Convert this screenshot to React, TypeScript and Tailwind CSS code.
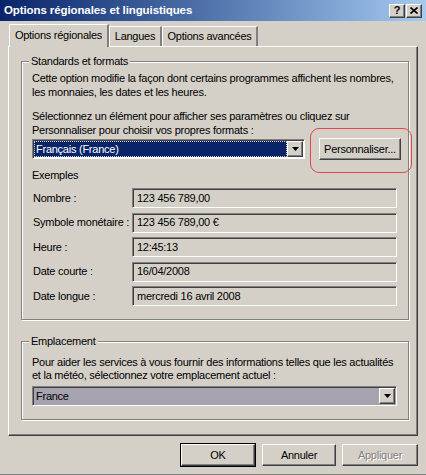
import React from 'react';

const raised =
  'border border-t-white border-l-white border-b-[#404040] border-r-[#404040] shadow-[inset_-1px_-1px_0_#808080]';
const sunken =
  'border border-t-[#808080] border-l-[#808080] border-b-white border-r-white shadow-[inset_1px_1px_0_#404040]';

const Arrow = () => (
  <div className={`w-[16px] h-[16px] bg-[#d4d0c8] flex items-center justify-center ${raised}`}>
    <svg width="7" height="4" viewBox="0 0 7 4">
      <path d="M0 0h7L3.5 4z" fill="#000" />
    </svg>
  </div>
);

const Group = ({ title, className, children }: { title: string; className?: string; children: React.ReactNode }) => (
  <div className={`border border-[#808080] shadow-[1px_1px_0_#fff,inset_1px_1px_0_#fff] ${className ?? ''}`}>
    <div className="-mt-[8px] ml-[7px] px-[2px] w-fit bg-[#d4d0c8] leading-[14px]">{title}</div>
    {children}
  </div>
);

const examples = [
  ['Nombre :', '123 456 789,00'],
  ['Symbole monétaire :', '123 456 789,00 €'],
  ['Heure :', '12:45:13'],
  ['Date courte :', '16/04/2008'],
  ['Date longue :', 'mercredi 16 avril 2008'],
];

export default function App() {
  return (
    <div
      className="w-[426px] h-[475px] bg-[#d4d0c8] text-black text-[11px] tracking-[-0.25px] flex flex-col overflow-hidden border-b border-[#808080]"
      style={{ fontFamily: '"Liberation Sans", Arial, sans-serif' }}
    >
      {/* title bar */}
      <div className="h-[21px] shrink-0 flex items-center justify-between pl-[4px] pr-[4px] bg-gradient-to-r from-[#0a246a] to-[#a6caf0]">
        <span className="text-white font-bold text-[11.5px] tracking-[-0.1px]">Options régionales et linguistiques</span>
        <div className="flex gap-[1px]">
          <div className={`w-[16px] h-[14px] bg-[#d4d0c8] flex items-center justify-center font-bold text-[11px] leading-none ${raised}`}>?</div>
          <div className={`w-[16px] h-[14px] bg-[#d4d0c8] flex items-center justify-center ${raised}`}>
            <svg width="8" height="7" viewBox="0 0 8 7">
              <path d="M0.5 0.5l7 6M7.5 0.5l-7 6" stroke="#000" strokeWidth="1.6" />
            </svg>
          </div>
        </div>
      </div>

      {/* tabs */}
      <div className="pl-[9px] h-[25px] flex items-end shrink-0">
        <div className="relative z-10 h-[23px] -mb-[1px] w-[100px] bg-[#d4d0c8] border-t border-l border-white border-r-2 border-r-[#808080] flex items-center justify-center pb-[2px]">
          Options régionales
        </div>
        <div className="h-[20px] w-[53px] border-t border-l border-white border-r-2 border-r-[#808080] flex items-center justify-center">
          Langues
        </div>
        <div className="h-[20px] w-[96px] border-t border-l border-white border-r-2 border-r-[#808080] flex items-center justify-center">
          Options avancées
        </div>
      </div>

      {/* panel */}
      <div className="ml-[8px] w-[410px] h-[390px] shrink-0 border-t border-l border-white border-r border-b border-r-[#404040] border-b-[#404040] shadow-[inset_-1px_-1px_0_#808080] pl-[12px] pr-[8px] pt-[14px]">
        <Group title="Standards et formats" className="h-[259px]">
          <div className="pl-[10px] pr-[4px] whitespace-nowrap">
            <p className="mt-[3px] leading-[14px]">
              Cette option modifie la façon dont certains programmes affichent les nombres,
              <br />
              les monnaies, les dates et les heures.
            </p>
            <p className="mt-[10px] leading-[14px]">
              Sélectionnez un élément pour afficher ses paramètres ou cliquez sur
              <br />
              Personnaliser pour choisir vos propres formats :
            </p>
            <div className="relative flex items-center gap-[13px] mt-[1px]">
              <div className={`w-[273px] h-[20px] bg-white flex items-center p-[1px] ${sunken}`}>
                <div className="flex-1 h-full bg-[#0a246a] text-white pl-[2px] flex items-center outline outline-1 outline-dotted outline-[#d4d0c8] -outline-offset-1">
                  Français (France)
                </div>
                <Arrow />
              </div>
              <div className={`w-[82px] h-[22px] ml-[1px] flex items-center justify-center ${raised}`}>Personnaliser...</div>
              <div className="absolute left-[278px] -top-[10px] w-[102px] h-[45px] rounded-[9px] border border-[#e04848]" />
            </div>
            <div className="mt-[8px] leading-[14px]">Exemples</div>
            <div className="mt-[6px] flex flex-col gap-[4.5px]">
              {examples.map(([label, value]) => (
                <div key={label} className="flex items-center">
                  <span className="w-[100px] pl-[1px]">{label}</span>
                  <div className={`w-[265px] h-[20px] flex items-center pl-[4px] ${sunken}`}>{value}</div>
                </div>
              ))}
            </div>
          </div>
        </Group>

        <Group title="Emplacement" className="mt-[21px] h-[79px]">
          <div className="pl-[10px] pr-[4px] whitespace-nowrap">
            <p className="mt-[8px] leading-[13px]">
              Pour aider les services à vous fournir des informations telles que les actualités
              <br />
              et la météo, sélectionnez votre emplacement actuel :
            </p>
            <div className={`mt-[4px] w-[365px] h-[20px] bg-[#a6a3ae] flex items-center p-[1px] ${sunken}`}>
              <div className="flex-1 pl-[2px]">France</div>
              <Arrow />
            </div>
          </div>
        </Group>
      </div>

      {/* buttons */}
      <div className="flex justify-end gap-[6px] pr-[8px] mt-[8px]">
        <div className="w-[74px] h-[22px] outline outline-1 outline-black">
          <div className={`w-full h-full flex items-center justify-center ${raised}`}>OK</div>
        </div>
        <div className={`w-[74px] h-[22px] ml-[1px] flex items-center justify-center ${raised}`}>Annuler</div>
        <div className={`w-[76px] h-[22px] flex items-center justify-center text-[#808080] [text-shadow:1px_1px_0_#fff] ${raised}`}>
          Appliquer
        </div>
      </div>
    </div>
  );
}
